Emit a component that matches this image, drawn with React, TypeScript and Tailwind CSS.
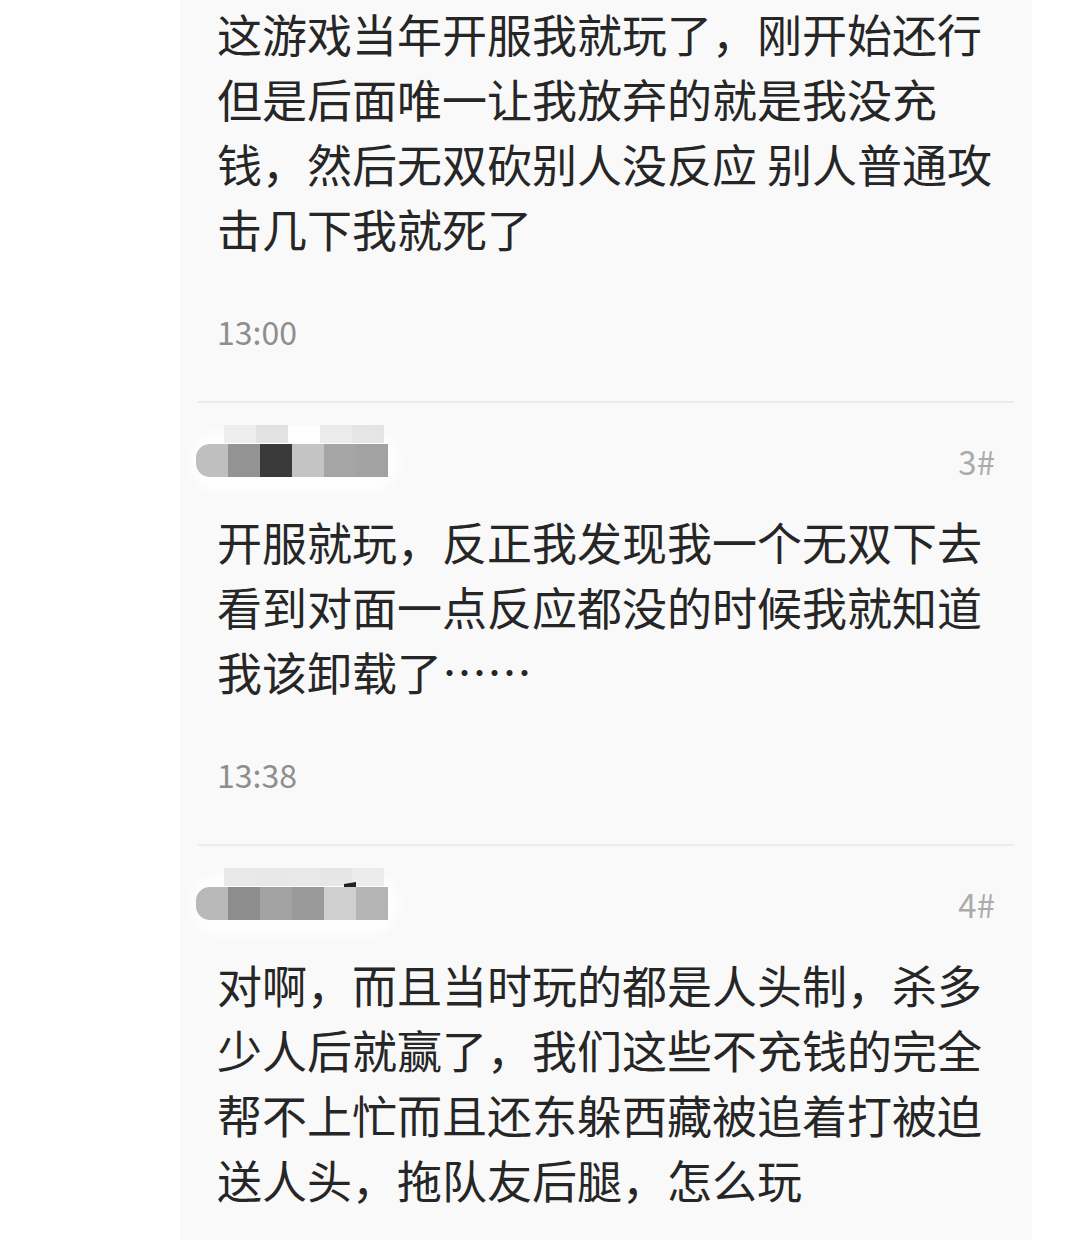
import React from "react";

type Post = {
  lines: string[];
  time: string;
};

const font = '"Noto Sans CJK SC", "Noto Sans", sans-serif';

const MosaicName = ({
  top,
  bottom,
  mark,
}: {
  top: string[];
  bottom: string[];
  mark?: boolean;
}) => (
  <div className="relative h-[40px] w-[200px]">
    <div className="absolute left-[-6px] top-[-10px] h-[62px] w-[210px] rounded-full bg-white/80 blur-[6px]" />
    <div className="absolute left-[28px] top-[-16px] flex opacity-60">
      {top.map((c, i) => (
        <div key={i} className="h-[18px] w-[32px]" style={{ background: c }} />
      ))}
    </div>
    <div className="absolute left-0 top-[3px] flex overflow-hidden rounded-l-[14px]">
      {bottom.map((c, i) => (
        <div key={i} className="h-[33px] w-[32px]" style={{ background: c }} />
      ))}
    </div>
    {mark && (
      <div className="absolute left-[148px] top-[-2px] h-[5px] w-[12px] bg-[#222] [clip-path:polygon(0_40%,100%_0,100%_100%,0_100%)]" />
    )}
  </div>
);

const PostBody = ({ post }: { post: Post }) => (
  <div>
    <div className="text-[45px] leading-[65px] text-[#262626]">
      {post.lines.map((line, i) => (
        <div key={i} className="whitespace-nowrap">
          {line}
        </div>
      ))}
    </div>
    <p className="mt-[50px] text-[32px] leading-[40px] text-[#8e8e8e]">
      {post.time}
    </p>
  </div>
);

const Header = ({
  floor,
  top,
  bottom,
  mark,
}: {
  floor: string;
  top: string[];
  bottom: string[];
  mark?: boolean;
}) => (
  <div className="mt-[38px] flex h-[40px] items-center justify-between pl-[16px] pr-[37px]">
    <MosaicName top={top} bottom={bottom} mark={mark} />
    <span className="text-[33px] leading-[40px] text-[#ababab]">{floor}</span>
  </div>
);

const Divider = () => (
  <div className="mx-[18px] mt-[50px] h-[2px] bg-[#ececec]" />
);

export default function App() {
  const first: Post = {
    lines: [
      "这游戏当年开服我就玩了，刚开始还行",
      "但是后面唯一让我放弃的就是我没充",
      "钱，然后无双砍别人没反应 别人普通攻",
      "击几下我就死了",
    ],
    time: "13:00",
  };
  const second: Post = {
    lines: [
      "开服就玩，反正我发现我一个无双下去",
      "看到对面一点反应都没的时候我就知道",
      "我该卸载了……",
    ],
    time: "13:38",
  };
  const third = [
    "对啊，而且当时玩的都是人头制，杀多",
    "少人后就赢了，我们这些不充钱的完全",
    "帮不上忙而且还东躲西藏被追着打被迫",
    "送人头，拖队友后腿，怎么玩",
  ];

  return (
    <div
      className="h-[1240px] w-[1076px] overflow-hidden bg-white"
      style={{ fontFamily: font }}
    >
      <div className="ml-[180px] h-full w-[852px] bg-[#f9f9f9]">
        <div className="pl-[37px] pr-[20px] pt-[1px]">
          <PostBody post={first} />
        </div>
        <Divider />
        <Header
          floor="3#"
          top={["#e6e5e6", "#d3d2d3", "#ffffff", "#e2e1e2", "#d8d7d8"]}
          bottom={["#c0bfc0", "#949394", "#3a393a", "#c5c4c5", "#a6a5a6", "#a3a2a3"]}
        />
        <div className="mt-[28px] pl-[37px] pr-[20px]">
          <PostBody post={second} />
        </div>
        <Divider />
        <Header
          floor="4#"
          top={["#dedddf", "#dcdbdc", "#dddcdd", "#dad9da", "#e4e3e4"]}
          bottom={["#bab9ba", "#8e8d8e", "#a3a2a3", "#9a999a", "#d0cfd0", "#b5b4b5"]}
          mark
        />
        <div className="mt-[28px] pl-[37px] pr-[20px] text-[45px] leading-[65px] text-[#262626]">
          {third.map((line, i) => (
            <div key={i} className="whitespace-nowrap">
              {line}
            </div>
          ))}
        </div>
      </div>
    </div>
  );
}
